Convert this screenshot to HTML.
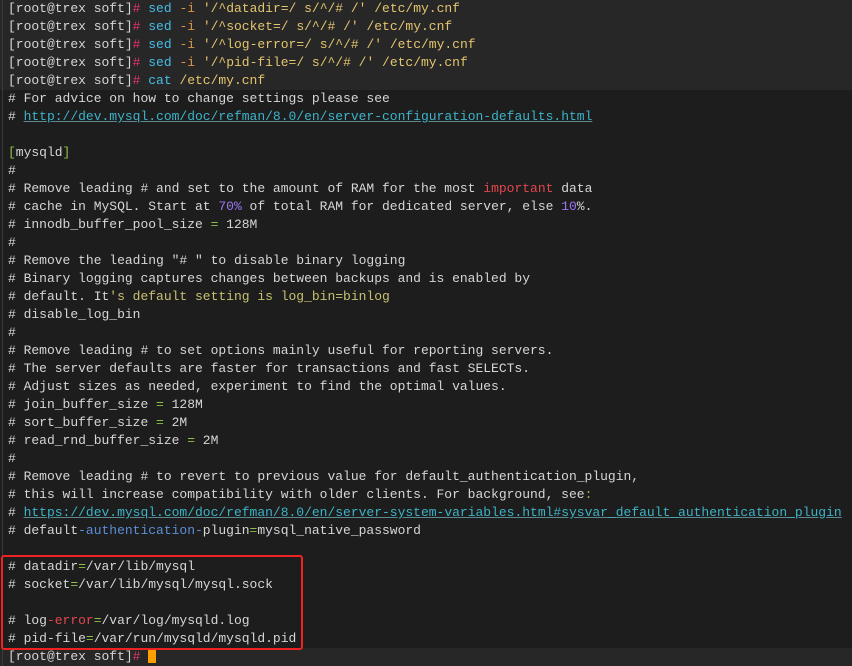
<!DOCTYPE html>
<html><head><meta charset="utf-8"><style>
html,body{margin:0;padding:0;}
body{width:852px;height:666px;background:#1d1d1d;overflow:hidden;position:relative;font-family:"Liberation Mono",monospace;font-size:13px;letter-spacing:-0.01px;color:#d6d6d6;}
.l{height:18px;line-height:18px;padding-left:8px;white-space:pre;}
.c{background:#272727;}
.p{color:#d6d6d6}.h{color:#e8346a}.s{color:#46bde6}.o{color:#d8944a}.q{color:#e3c56e}
.g{color:#8cc04a}.r{color:#e0474f}.v{color:#9b77f0}.y{color:#c8c070}
.u{color:#3db3c8;text-decoration:underline;text-decoration-color:#5a8a90}
.b{color:#5a8fd8}
.box{position:absolute;left:1px;top:555px;width:298px;height:91px;border:2px solid #ee2222;border-radius:3px;}
.cur{display:inline-block;width:8px;height:15px;background:#ffa000;vertical-align:-3px;}
.edge{position:absolute;left:2px;top:0;width:1px;height:666px;background:#3a3a3a;}
</style></head><body>
<div class="edge"></div>
<div class="l c"><span class="p">[root@trex soft]</span><span class="h">#</span> <span class="s">sed</span> <span class="o">-i</span> <span class="q">'/^datadir=/ s/^/# /'</span> <span class="q">/etc/my.cnf</span></div>
<div class="l c"><span class="p">[root@trex soft]</span><span class="h">#</span> <span class="s">sed</span> <span class="o">-i</span> <span class="q">'/^socket=/ s/^/# /'</span> <span class="q">/etc/my.cnf</span></div>
<div class="l c"><span class="p">[root@trex soft]</span><span class="h">#</span> <span class="s">sed</span> <span class="o">-i</span> <span class="q">'/^log-error=/ s/^/# /'</span> <span class="q">/etc/my.cnf</span></div>
<div class="l c"><span class="p">[root@trex soft]</span><span class="h">#</span> <span class="s">sed</span> <span class="o">-i</span> <span class="q">'/^pid-file=/ s/^/# /'</span> <span class="q">/etc/my.cnf</span></div>
<div class="l c"><span class="p">[root@trex soft]</span><span class="h">#</span> <span class="s">cat</span> <span class="q">/etc/my.cnf</span></div>
<div class="l"># For advice on how to change settings please see</div>
<div class="l"># <span class="u">http://dev.mysql.com/doc/refman/8.0/en/server-configuration-defaults.html</span></div>
<div class="l"> </div>
<div class="l"><span class="g">[</span>mysqld<span class="g">]</span></div>
<div class="l">#</div>
<div class="l"># Remove leading # and set to the amount of RAM for the most <span class="r">important</span> data</div>
<div class="l"># cache in MySQL. Start at <span class="v">70%</span> of total RAM for dedicated server, else <span class="v">10</span>%.</div>
<div class="l"># innodb_buffer_pool_size <span class="g">=</span> 128M</div>
<div class="l">#</div>
<div class="l"># Remove the leading "# " to disable binary logging</div>
<div class="l"># Binary logging captures changes between backups and is enabled by</div>
<div class="l"># default. It<span class="y">'s default setting is log_bin=binlog</span></div>
<div class="l"># disable_log_bin</div>
<div class="l">#</div>
<div class="l"># Remove leading # to set options mainly useful for reporting servers.</div>
<div class="l"># The server defaults are faster for transactions and fast SELECTs.</div>
<div class="l"># Adjust sizes as needed, experiment to find the optimal values.</div>
<div class="l"># join_buffer_size <span class="g">=</span> 128M</div>
<div class="l"># sort_buffer_size <span class="g">=</span> 2M</div>
<div class="l"># read_rnd_buffer_size <span class="g">=</span> 2M</div>
<div class="l">#</div>
<div class="l"># Remove leading # to revert to previous value for default_authentication_plugin,</div>
<div class="l"># this will increase compatibility with older clients. For background, see<span class="g">:</span></div>
<div class="l"># <span class="u">https://dev.mysql.com/doc/refman/8.0/en/server-system-variables.html#sysvar_default_authentication_plugin</span></div>
<div class="l"># default<span class="b">-authentication-</span>plugin<span class="g">=</span>mysql_native_password</div>
<div class="l"> </div>
<div class="l"># datadir<span class="g">=</span>/var/lib/mysql</div>
<div class="l"># socket<span class="g">=</span>/var/lib/mysql/mysql.sock</div>
<div class="l"> </div>
<div class="l"># log<span class="r">-error</span><span class="g">=</span>/var/log/mysqld.log</div>
<div class="l"># pid-file<span class="g">=</span>/var/run/mysqld/mysqld.pid</div>
<div class="l c"><span class="p">[root@trex soft]</span><span class="h">#</span> <span class="cur"></span></div>
<div class="box"></div>
</body></html>
